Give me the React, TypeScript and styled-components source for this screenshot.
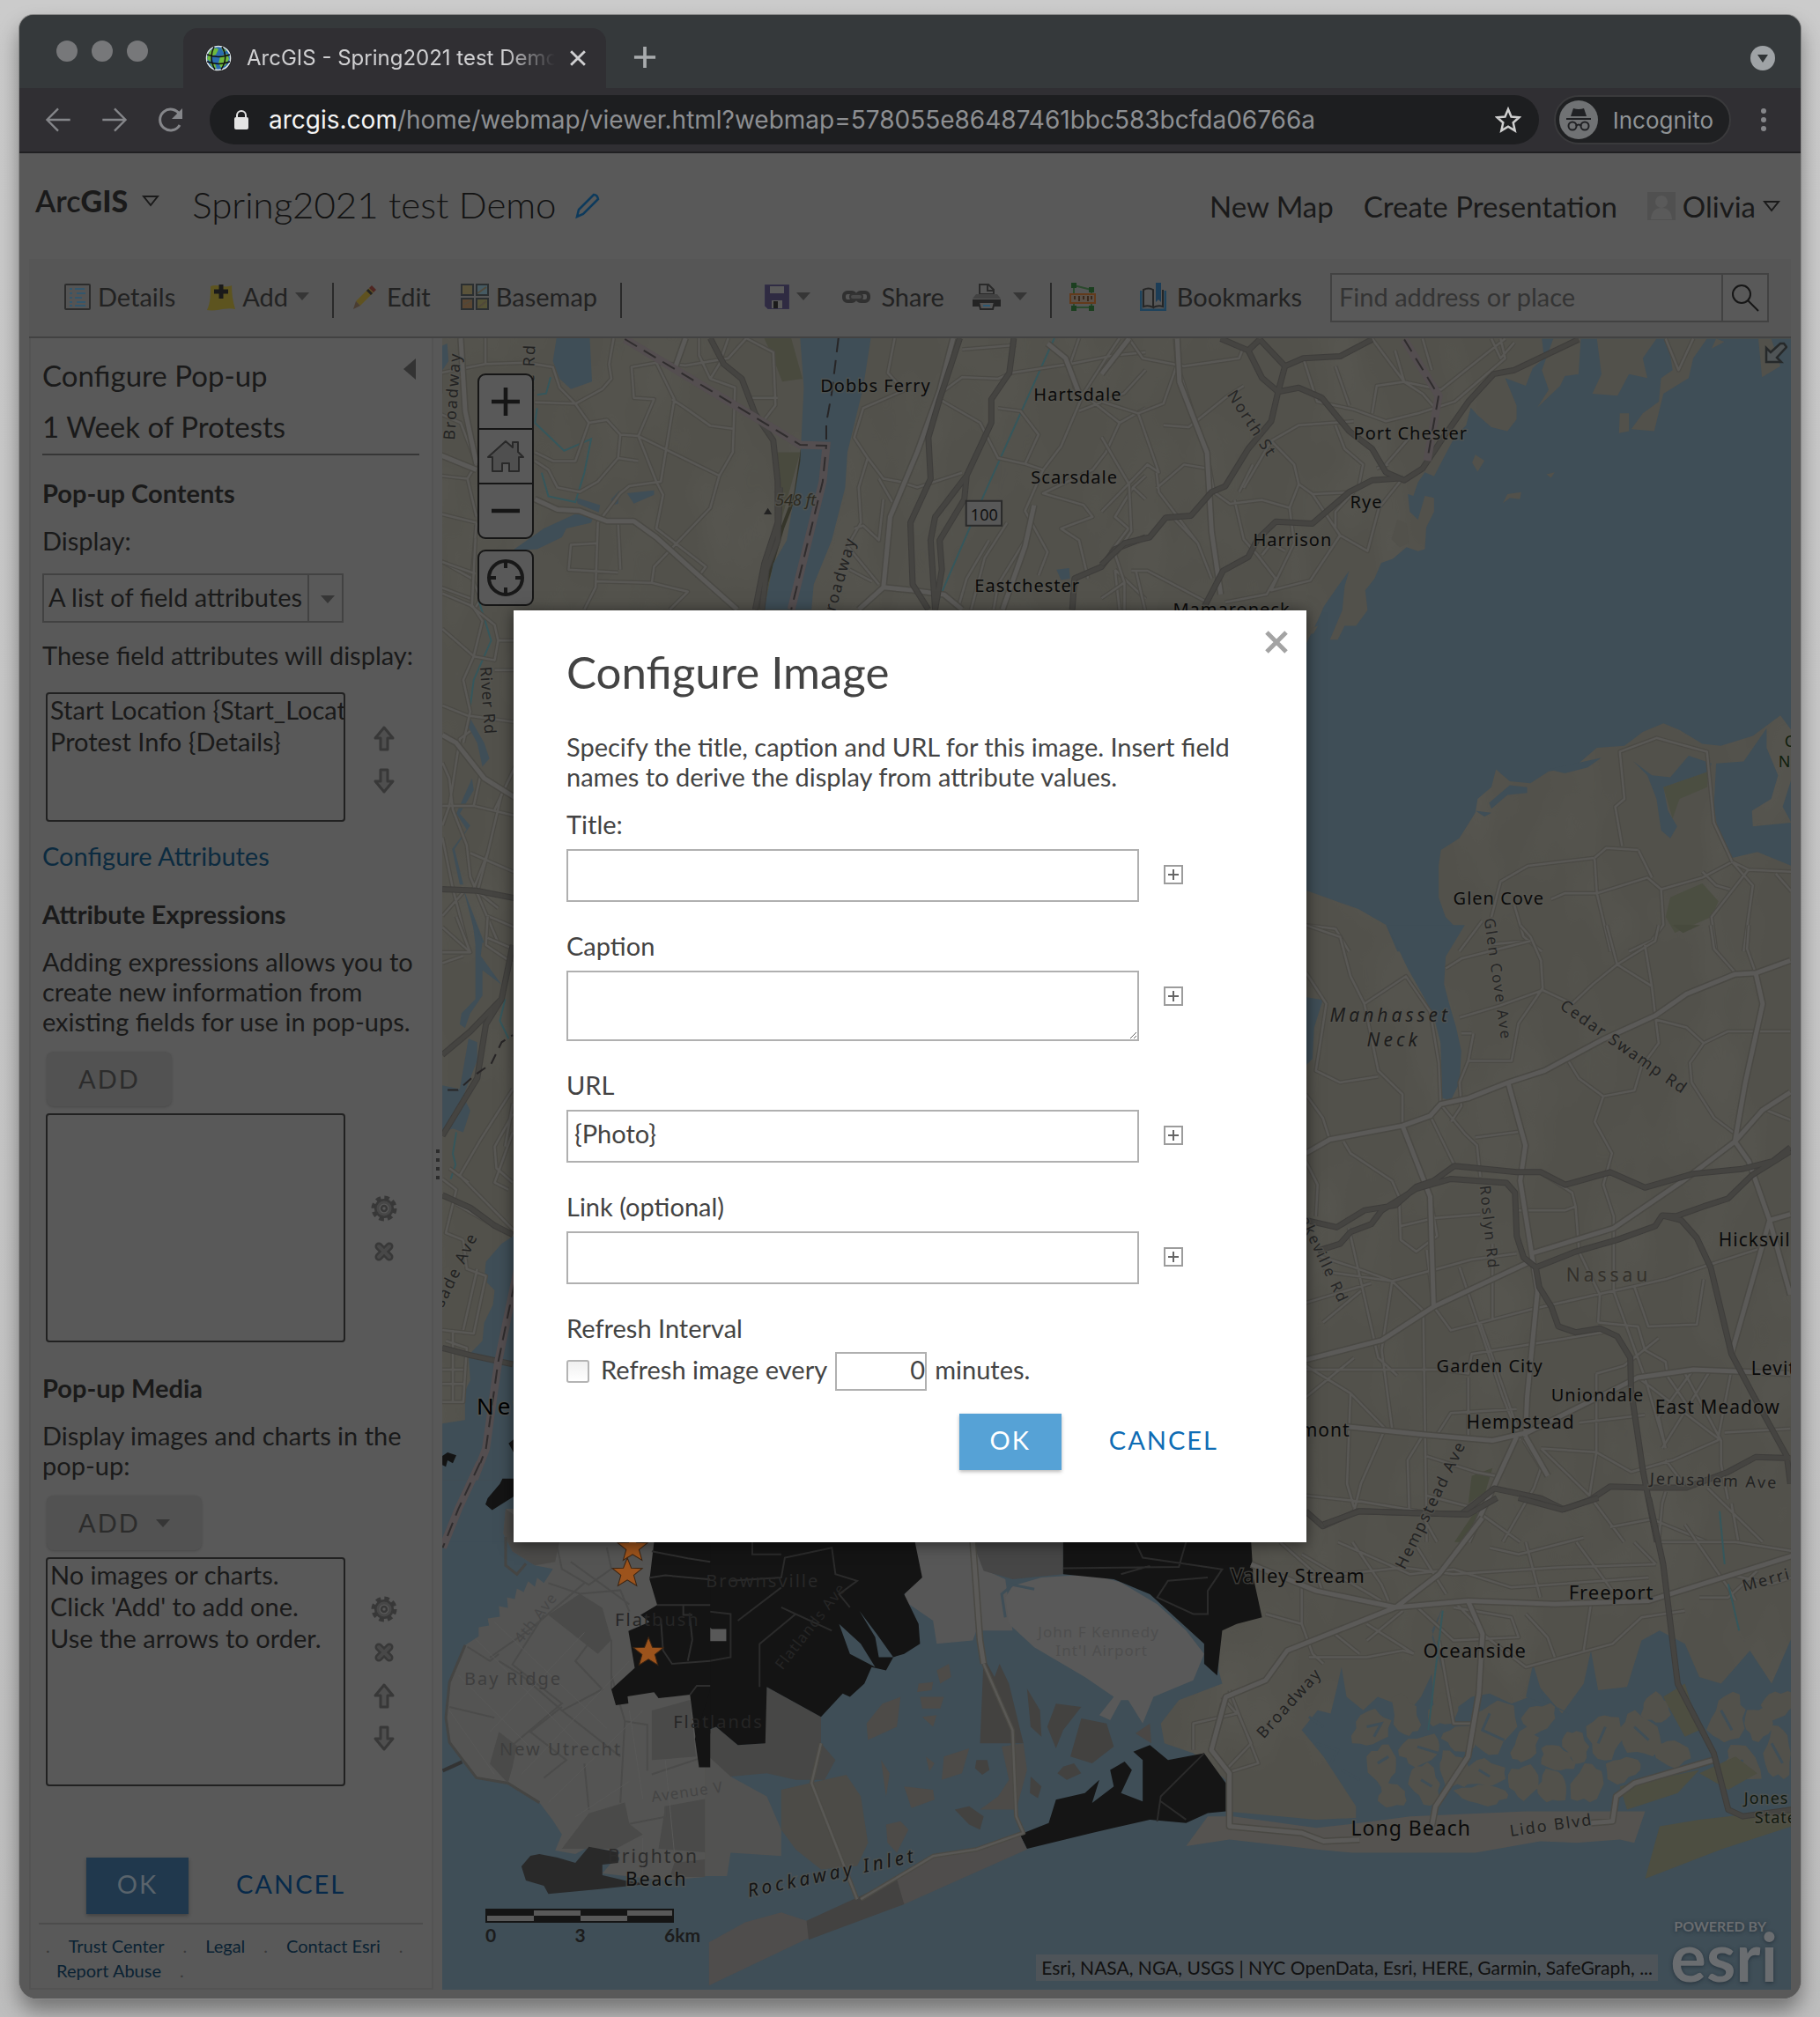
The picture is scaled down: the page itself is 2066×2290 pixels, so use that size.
import React from "react";
import styled, { createGlobalStyle, css } from "styled-components";

const ui = `Lato, "Open Sans", "Liberation Sans", sans-serif`;
const chromeFont = `Inter, Roboto, "Liberation Sans", sans-serif`;

const Global = createGlobalStyle`
  * { box-sizing: border-box; }
  body { margin: 0; background: linear-gradient(#cbcbcb, #c6c6c6 60%, #bebebe); font-family: ${ui}; }
  button, input, select, textarea { font: inherit; color: inherit; margin: 0; }
  button { border: 0; background: none; padding: 0; display: flex; align-items: center; }
  a { text-decoration: none; color: inherit; }
  h1, h2, h3, p { margin: 0; font-weight: 400; }
  svg { display: block; flex: none; }
`;

/* ---------- browser frame ---------- */

const Desktop = styled.div`
  padding: 17px 22px 22px;
`;
const BrowserWindow = styled.div`
  border-radius: 16px 16px 20px 20px;
  overflow: hidden;
  background: #595959;
  box-shadow: 0 0 0 1px #8a8a8a, 0 14px 24px rgba(0, 0, 0, 0.4);
`;
const TabStrip = styled.div`
  display: flex;
  align-items: flex-end;
  height: 83px;
  padding: 0 29px 0 42px;
  background: #35393b;
  color: #d0d0d2;
  font-family: ${chromeFont};
`;
const Lights = styled.div`
  display: flex;
  gap: 16px;
  margin: 0 40px 30px 0;
`;
const Light = styled.span`
  width: 24px;
  height: 24px;
  border-radius: 50%;
  background: #77787a;
`;
const Tab = styled.div`
  display: flex;
  align-items: center;
  gap: 16px;
  width: 480px;
  height: 68px;
  padding: 0 22px 0 24px;
  border-radius: 16px 16px 0 0;
  background: #302f33;
`;
const TabTitle = styled.span`
  flex: 1;
  overflow: hidden;
  white-space: nowrap;
  font-size: 24px;
  line-height: 32px;
  mask-image: linear-gradient(90deg, #000 84%, transparent 100%);
`;
const NewTab = styled.button`
  margin: 0 auto 22px 31px;
  color: #a8abad;
`;
const TabMenu = styled.button`
  margin-bottom: 20px;
`;
const NavBar = styled.div`
  display: flex;
  align-items: center;
  height: 74px;
  padding: 0 28px 0 28px;
  gap: 17px;
  background: #302f33;
  border-bottom: 2px solid #202022;
  font-family: ${chromeFont};
`;
const NavButtons = styled.div`
  display: flex;
  gap: 32px;
  margin-right: 11px;
  color: #85868a;
`;
const Address = styled.div`
  display: flex;
  flex: 1;
  align-items: center;
  height: 56px;
  padding: 0 20px 0 27px;
  gap: 22px;
  border-radius: 28px;
  background: #1d1e20;
  color: #8d8f92;
  font-size: 28px;
`;
const Url = styled.span`
  flex: 1;
  white-space: nowrap;
  b { font-weight: 400; color: #f4f4f4; }
`;
const Incognito = styled.div`
  display: flex;
  align-items: center;
  gap: 17px;
  height: 56px;
  padding: 0 18px 0 4px;
  border: 2px solid #3a3a3c;
  border-radius: 28px;
  background: #1f2022;
  color: #8f9396;
  font-size: 26px;
`;

/* ---------- app header ---------- */

const Page = styled.div`
  position: relative;
  padding: 0 11px 10px;
  background: #595959;
  color: #1a1a1a;
`;
const Header = styled.header`
  display: flex;
  align-items: center;
  height: 120px;
  padding: 0 12px 0 7px;
`;
const Brand = styled.button`
  gap: 16px;
  margin-bottom: 12px;
  font-size: 34px;
  line-height: 40px;
  span { font-weight: 600; }
  b { font-weight: 900; }
`;
const MapTitle = styled.h1`
  margin: 0 20px 4px 37px;
  font-size: 42px;
  line-height: 48px;
  font-weight: 300;
  color: #121212;
`;
const HeaderNav = styled.nav`
  display: flex;
  align-items: center;
  gap: 34px;
  margin-left: auto;
  font-size: 33px;
  line-height: 40px;
`;
const User = styled.button`
  gap: 8px;
`;
const Toolbar = styled.div`
  display: flex;
  align-items: center;
  height: 90px;
  padding: 0 25px 0 40px;
  border-bottom: 2px solid #424242;
  background: #565656;
`;
const ToolGroup = styled.div<{ $end?: boolean }>`
  display: flex;
  align-items: center;
  margin-left: ${(p) => (p.$end ? "auto" : "0")};
`;
const Tool = styled.button<{ $after?: number; $gap?: number }>`
  gap: ${(p) => p.$gap ?? 8}px;
  margin: 0 ${(p) => p.$after ?? 34}px 3px 0;
  font-size: 29px;
  line-height: 34px;
  color: #222;
`;
const Divider = styled.span`
  width: 2px;
  height: 40px;
  margin: 6px 20px 0 0;
  background: #2a2a2a;
`;
const Search = styled.form`
  display: flex;
  width: 498px;
  height: 56px;
  border: 2px solid #424242;
  input {
    flex: 1;
    min-width: 0;
    padding: 0 8px 4px;
    border: 0;
    outline: 0;
    background: #595959;
    font-size: 29px;
  }
  input::placeholder { color: #343434; opacity: 1; }
  button {
    width: 52px;
    justify-content: center;
    border-left: 2px solid #424242;
    background: #595959;
  }
`;

/* ---------- side panel ---------- */

const Workspace = styled.main`
  display: flex;
`;
const Side = styled.aside`
  width: 459px;
  padding: 23px 14px 6px 13px;
  border: 2px solid #535353;
  border-top: 0;
  font-size: 29px;
  line-height: 34px;
`;
const SideHead = styled.div`
  display: flex;
  justify-content: space-between;
  align-items: flex-start;
`;
const SideTitle = styled.h2`
  font-size: 33px;
  line-height: 38px;
`;
const LayerTitle = styled(SideTitle)`
  margin-top: 20px;
  padding-bottom: 12px;
  border-bottom: 2px solid #363636;
  white-space: nowrap;
`;
const Heading = styled.h3<{ $top: number }>`
  margin: ${(p) => p.$top}px 0 20px;
  font-size: 29px;
  font-weight: 700;
`;
const Combo = styled.div`
  position: relative;
  width: 342px;
  margin: 20px 0;
  select {
    width: 100%;
    height: 56px;
    padding: 0 40px 2px 5px;
    appearance: none;
    border: 2px solid #424242;
    border-radius: 0;
    background: linear-gradient(90deg, #595959 299px, #424242 299px 301px, #595959 301px);
  }
  svg { position: absolute; right: 10px; top: 25px; pointer-events: none; }
`;
const ListRow = styled.div<{ $top: number }>`
  display: flex;
  align-items: center;
  gap: 29px;
  margin: ${(p) => p.$top}px 0 0 4px;
`;
const ListBox = styled.select<{ $h: number }>`
  width: 340px;
  height: ${(p) => p.$h}px;
  padding: 0;
  overflow: hidden;
  border: 2px solid #212121;
  border-radius: 4px;
  background: #595959;
  option { height: 36px; padding: 0 3px; line-height: 32px; color: #1a1a1a; overflow: hidden; }
`;
const Actions = styled.div`
  display: flex;
  flex-direction: column;
  gap: 19px;
  padding-top: 5px;
`;
const TextLink = styled.a`
  display: block;
  margin-top: 22px;
  color: #0c2b40;
`;
const AddButton = styled.button`
  height: 62px;
  margin: 17px 0 0 5px;
  padding: 0 36px;
  gap: 18px;
  border-radius: 8px;
  background: #525252;
  color: #2c2c2c;
  letter-spacing: 2px;
  box-shadow: 0 1px 3px rgba(0, 0, 0, 0.18);
`;
const buttonText = css`
  font-size: 29px;
  letter-spacing: 2px;
`;
const SideButtons = styled.div`
  display: flex;
  gap: 54px;
  margin: 81px 0 10px 50px;
`;
const Ok = styled.button<{ $dim?: boolean }>`
  ${buttonText}
  justify-content: center;
  width: 116px;
  height: 64px;
  padding-bottom: 4px;
  background: ${(p) => (p.$dim ? "#20384d" : "#56a2d6")};
  color: ${(p) => (p.$dim ? "#59636b" : "#fff")};
  box-shadow: 0 2px 4px rgba(0, 0, 0, 0.28);
`;
const Cancel = styled.button<{ $dim?: boolean }>`
  ${buttonText}
  padding-bottom: 4px;
  color: ${(p) => (p.$dim ? "#06294a" : "#0e6cb4")};
`;
const FootLinks = styled.footer`
  margin: 0 -4px;
  padding: 10px 8px 0;
  border-top: 2px solid #4c4c4c;
  font-size: 20px;
  line-height: 28px;
  color: #0a2233;
`;
const FootRow = styled.div<{ $inset?: boolean }>`
  display: flex;
  gap: 21px;
  padding-left: ${(p) => (p.$inset ? 12 : 0)}px;
  white-space: nowrap;
  span { color: #3a3a3a; }
`;
const Splitter = styled.div`
  display: flex;
  flex-direction: column;
  align-items: center;
  justify-content: center;
  gap: 6px;
  width: 10px;
  background: #585858;
  i { width: 4px; height: 4px; background: #2c2c2c; }
`;

/* ---------- map ---------- */

const MapPane = styled.section`
  position: relative;
  flex: 1;
  min-width: 0;
  overflow: hidden;
  background: #3f4e57;
`;
const MapArt = styled.svg`
  position: absolute;
  inset: 0;
  width: 100%;
  height: 100%;
  font-family: "Noto Sans", "Open Sans", sans-serif;
`;
const MapControls = styled.div`
  position: absolute;
  left: 40px;
  top: 40px;
  display: flex;
  flex-direction: column;
  gap: 12px;
`;
const ControlStack = styled.div`
  width: 64px;
  overflow: hidden;
  border: 2px solid #161616;
  border-radius: 9px;
  background: #595959;
  button { justify-content: center; width: 60px; height: 60px; color: #161616; }
  button + button { border-top: 2px solid #161616; height: 62px; }
`;
const Expand = styled.button`
  position: absolute;
  right: 4px;
  top: 4px;
`;
const ScaleBar = styled.div`
  position: absolute;
  left: 49px;
  bottom: 48px;
  width: 244px;
  color: #1c1c1c;
  font-size: 21px;
  line-height: 28px;
  font-weight: 700;
`;
const ScaleLabels = styled.div`
  display: flex;
  justify-content: space-between;
`;
const Credits = styled.div`
  position: absolute;
  right: 151px;
  bottom: 10px;
  padding: 0 6px;
  background: #4e5459;
  color: #111;
  font-size: 21px;
  line-height: 30px;
  white-space: nowrap;
`;
const Powered = styled.div`
  position: absolute;
  right: 15px;
  bottom: 12px;
  color: #6a6d70;
  text-shadow: 0 1px 4px #24303a;
  small { display: block; padding-left: 4px; font-size: 16px; line-height: 16px; font-weight: 700; }
  strong { display: block; font: 700 76px/52px ${ui}; }
`;

/* ---------- dialog ---------- */

const Overlay = styled.div`
  position: absolute;
  inset: 0;
  display: flex;
  align-items: center;
  justify-content: center;
`;
const Dialog = styled.div`
  position: relative;
  width: 900px;
  padding: 43px 60px 82px;
  background: #fff;
  color: #434343;
  font-size: 29px;
  line-height: 34px;
  box-shadow: 0 2px 16px rgba(0, 0, 0, 0.55);
`;
const Close = styled.button`
  position: absolute;
  top: 23px;
  right: 21px;
`;
const DialogTitle = styled.h2`
  margin-bottom: 41px;
  font-size: 51px;
  line-height: 54px;
`;
const Field = styled.div`
  margin-bottom: 33px;
  label { display: block; margin-bottom: 11px; }
`;
const Intro = styled.p`
  margin: 0 -8px 20px 0;
`;
const Control = styled.div`
  display: flex;
  gap: 27px;
`;
const boxed = css`
  width: 650px;
  padding: 0 7px 6px;
  border: 2px solid #b0b0b0;
  border-radius: 0;
  outline: 0;
  background: #fff;
`;
const TextInput = styled.input`
  ${boxed}
  height: 60px;
`;
const TextBox = styled.textarea`
  ${boxed}
  height: 80px;
`;
const Insert = styled.button`
  align-self: flex-start;
  margin-top: 17px;
`;
const Refresh = styled.div`
  display: flex;
  align-items: center;
  gap: 9px;
  margin-top: 10px;
  label { padding: 0 0 4px 4px; }
  span { padding-bottom: 4px; }
  input[type="text"] {
    width: 104px;
    height: 44px;
    padding: 0 0 4px;
    border: 2px solid #b0b0b0;
    text-align: right;
    outline: 0;
  }
`;
const Check = styled.input`
  appearance: none;
  width: 26px;
  height: 26px;
  border: 2px solid #b4b4b4;
  border-radius: 3px;
  background: linear-gradient(#f0f0f0, #fff);
`;
const DialogButtons = styled.div`
  display: flex;
  justify-content: flex-end;
  gap: 54px;
  margin: 26px 40px 0 0;
`;

/* ---------- icons ---------- */

const Caret = ({ size = 16, color = "#363636" }) => (
  <svg width={size} height={size / 2 + 1} viewBox="0 0 16 9"><path d="M0 0h16L8 9z" fill={color} /></svg>
);
const OpenCaret = () => (
  <svg width="20" height="14" viewBox="0 0 20 14"><path d="M2 2h16l-8 10z" fill="none" stroke="#1a1a1a" strokeWidth="2" /></svg>
);
const Globe = () => (
  <svg width="32" height="32" viewBox="0 0 32 32">
    <circle cx="16" cy="16" r="15" fill="#1b1b1b" />
    <circle cx="16" cy="16" r="13.6" fill="#2b6cae" stroke="#dfe6ea" strokeWidth="1.5" />
    <path d="M5 10c4-6 9-6 11-4l-3 6-5 2-1 6-4-3zM18 14l8-3 2 6-4 7-5 3-3-5zM6 21l6 1 2 6-5-2zM19 4l6 3-3 3z" fill="#6fb93c" />
    <path d="M11 3c-4 8-4 17 1 26M20 3c5 8 5 17-1 26M3 12c8 3 18 3 26 0M3 20c8 3 18 3 26 0" fill="none" stroke="#111" strokeWidth="1.5" />
  </svg>
);
const Line = ({ d, s = 28, w = 3, color = "currentColor" }: { d: string; s?: number; w?: number; color?: string }) => (
  <svg width={s} height={s} viewBox="0 0 28 28"><path d={d} fill="none" stroke={color} strokeWidth={w} /></svg>
);
const UpArrow = ({ down }: { down?: boolean }) => (
  <svg width="30" height="30" viewBox="0 0 30 30">
    <path d={down ? "M11 2h8v13h6L15 27 5 15h6z" : "M11 28h8V15h6L15 3 5 15h6z"} fill="#4f4f4f" stroke="#383838" strokeWidth="3" strokeLinejoin="round" />
  </svg>
);
const Gear = () => (
  <svg width="30" height="30" viewBox="0 0 30 30" fill="none" stroke="#383838">
    <circle cx="15" cy="15" r="12" strokeWidth="5" strokeDasharray="5.4 4.02" />
    <circle cx="15" cy="15" r="9" strokeWidth="4" />
    <circle cx="15" cy="15" r="7" stroke="#474747" strokeWidth="3" />
    <circle cx="15" cy="15" r="3" strokeWidth="2.5" />
  </svg>
);
const Cross = () => (
  <svg width="30" height="30" viewBox="0 0 30 30" fill="none" strokeLinecap="round">
    <path d="M9 9l12 12M21 9L9 21" stroke="#383838" strokeWidth="9" />
    <path d="M9 9l12 12M21 9L9 21" stroke="#484848" strokeWidth="4" />
  </svg>
);
const DetailsIcon = () => (
  <svg width="30" height="30" viewBox="0 0 30 30">
    <rect x="1" y="1" width="28" height="28" rx="1" fill="#545454" stroke="#2c2c2c" strokeWidth="2" />
    <path d="M6 6h3M6 11h3M6 16h3M6 21h3M6 25h3M12 6h11M14 11h10M12 16h8M14 21h10M12 25h12" stroke="#33566c" strokeWidth="2" />
  </svg>
);
const AddIcon = () => (
  <svg width="32" height="32" viewBox="0 0 32 32">
    <path d="M4 4c8-3 16 3 24-1 0 8 1 18 4 27-9-3-20 3-32 1 4-8 4-18 4-27z" fill="#5d541f" />
    <path d="M16 2v16M8 10h16" stroke="#1a1a1a" strokeWidth="5" />
  </svg>
);
const PencilIcon = () => (
  <svg width="30" height="30" viewBox="0 0 30 30">
    <path d="M5 20L20 5l5 5L10 25z" fill="#5f5220" /><path d="M5 20l5 5-8 4z" fill="#4a3d31" />
    <path d="M20 5l3-3 5 5-3 3z" fill="#4f2622" /><path d="M18 7l5 5" stroke="#222" strokeWidth="3" />
  </svg>
);
const BasemapIcon = () => (
  <svg width="32" height="30" viewBox="0 0 32 30" stroke="#2b2f31" strokeWidth="2">
    <rect x="1" y="1" width="13" height="12" fill="#5a533a" /><rect x="18" y="1" width="13" height="12" fill="#465a62" />
    <rect x="1" y="17" width="13" height="12" fill="#5a4632" /><rect x="18" y="17" width="13" height="12" fill="#555336" />
    <path d="M3 24l9-5M19 11l10-7M20 27l9-7" stroke="#51493a" />
  </svg>
);
const SaveIcon = () => (
  <svg width="28" height="28" viewBox="0 0 28 28">
    <path d="M0 0h28v28H4l-4-4z" fill="#2f2b42" /><path d="M6 2h16v8H6zM8 18h12v9H8z" fill="#595959" />
    <path d="M10 19h5v8h-5z" fill="#1b1b1b" /><path d="M0 0h28v28H4l-4-4z" fill="none" stroke="#37324d" />
  </svg>
);
const LinkIcon = () => (
  <svg width="32" height="16" viewBox="0 0 32 16" fill="none">
    <g stroke="#303030" strokeWidth="4"><rect x="2" y="3" width="13" height="10" rx="4" /><rect x="17" y="3" width="13" height="10" rx="4" /></g>
    <rect x="9" y="5" width="14" height="6" rx="3" fill="#4a4a4a" stroke="#333" strokeWidth="2" />
  </svg>
);
const PrintIcon = () => (
  <svg width="32" height="30" viewBox="0 0 32 30">
    <path d="M8 12V1h10l6 6v5z" fill="#565656" stroke="#2a2a2a" strokeWidth="2" /><path d="M17 1v7h7" fill="none" stroke="#2a2a2a" strokeWidth="2" />
    <path d="M4 12h24l4 5H0z" fill="#424242" /><path d="M0 18h32v8H0z" fill="#242424" />
    <path d="M7 21h18l-2 8H9z" fill="#555" stroke="#252525" strokeWidth="2" /><path d="M12 25h8" stroke="#2d5873" strokeWidth="2" />
  </svg>
);
const MeasureIcon = () => (
  <svg width="30" height="32" viewBox="0 0 30 32">
    <path d="M5 3l20 5v20H5z" fill="none" stroke="#2b4a2d" strokeWidth="2" />
    <rect x="1" y="13" width="28" height="10" fill="#5b5148" stroke="#633b1c" strokeWidth="2" />
    <path d="M6 15v4M11 15v6M16 15v4M21 15v6M25 15v4" stroke="#39291c" strokeWidth="2" />
    <path d="M2 0h6v6H2zM22 5h6v6h-6zM2 26h6v6H2zM22 26h6v6h-6z" fill="#1c3f20" />
  </svg>
);
const BookmarkIcon = () => (
  <svg width="30" height="32" viewBox="0 0 30 32">
    <path d="M1 9v22h28V9" fill="none" stroke="#1f435c" strokeWidth="3" />
    <path d="M4 27V8q6-3 11 0v20q-5-3-11-1zM15 28q6-3 11-1V8" fill="#575757" stroke="#262626" strokeWidth="2" />
    <path d="M18 0h6v22l-3-3-3 3z" fill="#1c3d57" />
  </svg>
);
const HouseIcon = () => (
  <svg width="44" height="38" viewBox="0 0 44 38">
    <path d="M2 20L22 2l8 7V3h6v11l6 6h-5v16H26v-9h-8v9H7V20z" fill="#4f4f4f" stroke="#292929" strokeWidth="2" strokeLinejoin="round" />
  </svg>
);
const LocateIcon = () => (
  <svg width="44" height="44" viewBox="0 0 44 44" fill="none" stroke="#181818" strokeWidth="4">
    <circle cx="22" cy="22" r="19" /><path d="M22 3v8M22 33v8M3 22h8M33 22h8" />
  </svg>
);
const SpyIcon = () => (
  <svg width="44" height="44" viewBox="0 0 44 44">
    <circle cx="22" cy="22" r="22" fill="#707274" />
    <path d="M16 9q6 2 12 0l3 9H13zM8 20h28v2H8z" fill="#202124" />
    <g fill="none" stroke="#202124" strokeWidth="2"><circle cx="15" cy="29" r="4.5" /><circle cx="29" cy="29" r="4.5" /><path d="M19 29q3-3 6 0" /></g>
  </svg>
);
const InsertIcon = () => (
  <svg width="24" height="24" viewBox="0 0 24 24" fill="none">
    <rect x="2" y="2" width="20" height="20" stroke="#9c9c9c" strokeWidth="2" />
    <path d="M12 6v12M6 12h12" stroke="#666" strokeWidth="2" />
  </svg>
);

/* ---------- map drawing ---------- */

const water = "#3f4e57";
const land = "#52514b";

/* Each tile of the map is drawn in its own grid and scaled into place. */
type TileProps = { x: number; y: number; sx: number; sy: number; children: React.ReactNode };
const Tile = ({ x, y, sx, sy, children }: TileProps) => (
  <g transform={`translate(${x} ${y}) scale(${sx} ${sy})`}>{children}</g>
);
const Roads = ({ d, kind }: { d: string; kind: "minor" | "major" | "highway" }) => {
  const style = { minor: ["#4b4a45", 5, "#595855", 2.5], major: ["#4a4944", 8, "#5b5a58", 5], highway: ["#3e3d3b", 7, "#454441", 5] }[kind] as [string, number, string, number];
  return (
    <g fill="none" strokeLinejoin="round">
      <path d={d} stroke={style[0]} strokeWidth={style[1]} vectorEffect="non-scaling-stroke" />
      <path d={d} stroke={style[2]} strokeWidth={style[3]} vectorEffect="non-scaling-stroke" />
    </g>
  );
};
const Border = ({ d }: { d: string }) => (
  <g fill="none">
    <path d={d} stroke="#544e50" strokeWidth="9" vectorEffect="non-scaling-stroke" />
    <path d={d} stroke="#2f2c2d" strokeWidth="2" strokeDasharray="16 9" vectorEffect="non-scaling-stroke" />
  </g>
);

type LabelSpec = { t: string; x: number; y: number; s?: number; r?: number; c?: string; i?: boolean; ls?: number; end?: boolean; bare?: boolean };
const labels: LabelSpec[] = [
  { t: "Dobbs Ferry", x: 931, y: 445 }, { t: "Hartsdale", x: 1173, y: 455 }, { t: "Scarsdale", x: 1170, y: 549 },
  { t: "Eastchester", x: 1106, y: 672 }, { t: "Mamaroneck", x: 1331, y: 699 }, { t: "Port Chester", x: 1536, y: 499 },
  { t: "Rye", x: 1532, y: 577 }, { t: "Harrison", x: 1422, y: 620 }, { t: "Glen Cove", x: 1649, y: 1027 },
  { t: "Garden City", x: 1630, y: 1557 }, { t: "Uniondale", x: 1760, y: 1590 }, { t: "East Meadow", x: 1878, y: 1604, s: 21 },
  { t: "Hempstead", x: 1664, y: 1621, s: 21 }, { t: "Hicksville", x: 1950, y: 1414, s: 21 }, { t: "Levittown", x: 1987, y: 1560, s: 21 },
  { t: "Elmont", x: 1532, y: 1630, s: 21, end: true }, { t: "Valley Stream", x: 1397, y: 1796, s: 22 }, { t: "Freeport", x: 1780, y: 1815, s: 22 },
  { t: "Oceanside", x: 1615, y: 1881, s: 22 }, { t: "Long Beach", x: 1533, y: 2083, s: 23 },
  { t: "Nassau", x: 1777, y: 1454, s: 21, c: "#33302a", ls: 4 },
  { t: "Manhasset", x: 1509, y: 1160, i: true, ls: 4, s: 21, c: "#1c1c1c" }, { t: "Neck", x: 1551, y: 1188, i: true, s: 21, ls: 4, c: "#1c1c1c" },
  { t: "Jones Beach", x: 1979, y: 2047, s: 18, c: "#121a10" }, { t: "State Park", x: 1991, y: 2069, s: 18, c: "#121a10" },
  { t: "Caumsett", x: 2025, y: 848, s: 18, c: "#10200c" }, { t: "N", x: 2018, y: 871, s: 18, c: "#10200c" },
  { t: "Merrick Rd", x: 1979, y: 1806, s: 18, r: -15, c: "#222", ls: 2 }, { t: "Lido Blvd", x: 1714, y: 2084, s: 18, r: -8, c: "#222", ls: 2 },
  { t: "Jerusalem Ave", x: 1872, y: 1684, s: 18, r: 2, c: "#222", ls: 2 }, { t: "Hempstead Ave", x: 1594, y: 1782, s: 18, r: -64, c: "#222", ls: 2 },
  { t: "Broadway", x: 1434, y: 1974, s: 18, r: -48, c: "#222", ls: 2 }, { t: "Rockaway Inlet", x: 850, y: 2153, s: 21, r: -12, i: true, c: "#151515", ls: 4 },
  { t: "Glen Cove Ave", x: 1684, y: 1043, s: 17, r: 82, c: "#262626", ls: 2 }, { t: "Cedar Swamp Rd", x: 1769, y: 1144, s: 18, r: 35, c: "#222", ls: 2 },
  { t: "Roslyn Rd", x: 1679, y: 1346, s: 17, r: 84, c: "#262626", ls: 2 }, { t: "Lakeville Rd", x: 1470, y: 1374, s: 17, r: 65, c: "#262626", ls: 2 },
  { t: "North St", x: 1392, y: 448, s: 18, r: 57, c: "#262626", ls: 2 }, { t: "Broadway", x: 516, y: 500, s: 18, r: -86, c: "#222", ls: 2 },
  { t: "Riverside Rd", x: 603, y: 518, s: 18, r: -88, c: "#222", ls: 2 }, { t: "Broadway", x: 944, y: 708, s: 18, r: -74, c: "#222", ls: 2 },
  { t: "River Rd", x: 545, y: 757, s: 18, r: 86, c: "#222", ls: 1 }, { t: "Palisade Ave", x: 486, y: 1519, s: 18, r: -64, c: "#222", ls: 2 },
  { t: "New York", x: 541, y: 1605, s: 26, ls: 4, c: "#000" },
  { t: "548 ft", x: 880, y: 574, s: 18, i: true, c: "#2c2a20", ls: 0 },
  { t: "Bay Ridge", x: 527, y: 1912, c: "#3e3e3e", bare: true, ls: 2 }, { t: "New Utrecht", x: 567, y: 1992, c: "#3e3e3e", bare: true, ls: 2 },
  { t: "Flatbush", x: 698, y: 1845, c: "#252525", bare: true, ls: 2 }, { t: "Flatlands", x: 764, y: 1961, c: "#252525", bare: true, ls: 2 },
  { t: "Brownsville", x: 801, y: 1801, c: "#282828", bare: true, ls: 2 }, { t: "Brighton", x: 690, y: 2114, s: 21, c: "#2c2c2c", bare: true, ls: 2 },
  { t: "Beach", x: 710, y: 2140, s: 21, c: "#0e0e0e", ls: 2 }, { t: "Avenue V", x: 740, y: 2045, s: 17, r: -8, c: "#444", bare: true },
  { t: "4th Ave", x: 592, y: 1866, s: 17, r: -52, c: "#474747", bare: true, ls: 1 }, { t: "Flatlands Ave", x: 888, y: 1896, s: 17, r: -52, c: "#262626", bare: true },
  { t: "John F Kennedy", x: 1178, y: 1858, s: 17, c: "#4e4e4e", bare: true, ls: 1 }, { t: "Int'l Airport", x: 1198, y: 1879, s: 17, c: "#4e4e4e", bare: true, ls: 1 },
];

/* Marsh islands south of Nassau: x, y, width, height. */
const islets = [
  [920, 640, 50, 110], [940, 745, 42, 120], [975, 590, 36, 130], [985, 715, 58, 90], [955, 860, 40, 75], [1000, 800, 42, 125], [1025, 590, 42, 100],
  [1046, 685, 52, 80], [1040, 765, 42, 110], [1085, 610, 60, 160], [1075, 790, 56, 80], [1065, 865, 70, 60], [1142, 690, 34, 110], [1135, 805, 44, 100],
  [1180, 745, 46, 80], [1155, 620, 46, 90], [1176, 820, 42, 100], [1212, 700, 34, 100], [1222, 805, 46, 115], [1245, 650, 48, 140], [1290, 650, 56, 130],
  [1270, 780, 46, 80], [1320, 590, 40, 90], [1335, 730, 52, 80], [1415, 590, 50, 150], [1462, 630, 40, 100], [1435, 745, 50, 110], [1486, 580, 44, 90], [1490, 690, 38, 160],
];
const isletPath = islets
  .map(([x, y, w, h], n) => {
    const lean = (n % 3) * 6 - 6;
    const points = Array.from({ length: 16 }, (_, k) => {
      const angle = (k / 16) * Math.PI * 2;
      const reach = 0.98 + 0.12 * Math.sin(n * 3.1 + k * 1.3) + 0.1 * Math.sin(n * 5.7 + k * 2.2);
      const dy = Math.sin(angle) * (h / 2) * reach;
      return `${(x + w / 2 + Math.cos(angle) * (w / 2) * reach + (lean * dy) / (h / 2)).toFixed(1)} ${(y + h / 2 + dy).toFixed(1)}`;
    });
    return `M${points.join("L")}Z`;
  })
  .join("");

const star = "M0-17L4.5-5.500 17-5 7.300 2.700 10.700 14.700 0 8-10.700 14.700-7.300 2.700-17-5-4.500-5.500Z";

const MapDrawing = () => (
  <MapArt viewBox="502 384 1531 1874" preserveAspectRatio="xMinYMin slice" role="img" aria-label="Map of New York City and Nassau County">
    <defs>
      <filter id="relief" x="0" y="0" width="1" height="1">
        <feTurbulence type="fractalNoise" baseFrequency="0.012 0.006" numOctaves="3" seed="8" />
        <feColorMatrix values="0 0 0 0 0.2  0 0 0 0 0.2  0 0 0 0 0.18  1.4 0 0 0 -0.6" />
      </filter>
    </defs>
    <rect x="502" y="384" width="1531" height="1874" fill={land} />
    <rect x="502" y="384" width="1531" height="1874" filter="url(#relief)" opacity="0.2" />

    <Tile x={500} y={380} sx={0.5102} sy={0.3333}>
      <path d="M720 12H780L805 150 760 160 740 80zM800 400L760 620 720 936H700L755 640 740 400z" fill="#494a3e" />
      <path d="M806 380L790 540 760 660 718 880" fill="none" stroke="#35352a" strokeWidth="4" vectorEffect="non-scaling-stroke" />
      <path d="M800 12H957L940 180 905 400 900 520 870 700 830 850 825 936H720L740 780 770 700 800 430 808 180ZM258 12H332L337 160 290 185 265 150 250 90ZM160 735L230 660 300 610 340 620 335 640 280 660 270 690 215 730ZM415 540L475 530 475 545 430 575ZM380 560L398 530 395 575 380 582ZM302 555L355 580 352 605 305 575ZM1370 800L1398 795 1400 830 1380 835ZM0 40L15 30 18 90 0 130Z" fill={water} />
      <path d="M245 145L235 200 215 205M215 250L210 300 275 395 335 355 320 470 300 570 240 550 225 470M1365 12L1210 540 1100 930" fill="none" stroke="#35575c" strokeWidth="2" vectorEffect="non-scaling-stroke" />
      <Roads kind="minor" d="M100 12V100L0 130M100 100L190 95 250 110 265 180 300 235 210 230M300 235L360 185 380 150 375 100 385 12M300 235L330 300 370 290 400 340 440 345 500 390 620 480M440 345L475 220 430 215 425 110 480 95 545 105 640 80 680 12M640 12L620 100 600 150 575 70 575 12M480 95L520 220 490 500 420 515 400 540 350 640 345 860 320 936M350 710L290 715 285 800 395 810M395 640L400 800M400 340L395 420 440 430M440 345L480 500 495 545 480 660 590 790 570 830M345 840L470 845 550 875 510 936M470 845L475 790 525 710 600 590 620 480 650 400 655 180 600 150M545 250L600 310 650 320M545 250L515 220M680 12L740 60 745 240 720 290M690 215H750M0 130V200M0 480L60 490 80 440 45 300 0 270M60 490L80 620M0 610L80 640M80 640L70 830 0 770M70 830L90 900 75 936M0 860L70 900M260 520L310 535 350 500 395 420M210 400L250 430 300 430 330 300M210 430L240 460 260 520" />
      <Roads kind="minor" d="M1010 12L995 130 1030 190 940 250 920 350 950 420 930 520 935 640 905 720 975 850M950 420L985 490 1020 500 1060 520 1140 480 1160 470M975 490L1005 570M1110 220L1200 300 1240 420 1300 440 1340 460 1300 600 1350 740 1330 820M1120 190L1160 145 1240 150 1270 130 1400 100 1500 70 1568 60M1160 50L1280 35M1240 250L1290 260 1330 340 1300 440M1420 12L1400 100 1410 180 1510 300 1480 400 1450 460 1340 540 1430 580 1450 620 1380 660 1420 700 1440 830M1568 250L1510 300M1510 12L1480 80 1430 200 1380 380 1340 460M1568 120L1520 200 1420 260M1568 480L1540 520 1568 560M1540 520L1500 620 1530 660 1490 740M1220 700L1170 830 1150 936M1260 640L1210 760 1180 936M1300 700L1240 850 1230 936M1500 800L1568 900M1500 800L1510 936M985 560L975 700 940 650 920 660M910 800L960 840" />
      <Roads kind="major" d="M0 410L80 460M45 12L55 260 80 440M210 560L260 595 310 600 370 635H430L480 690 560 800 660 936M1140 12L1110 190 1060 400 1000 620 985 860 1050 870 1120 885 1160 936M1350 30L1390 80 1420 200M1320 580L1300 720 1250 936M545 12L520 120M985 860L930 936" />
      <Roads kind="highway" d="M600 12L630 100 670 150 700 270 740 360 750 500V640L720 780 700 936M755 520L750 700 725 800 715 936M1155 12L1110 220 1085 350 1090 490 1045 640 1050 850 1085 936M1275 12L1265 130 1225 220V300L1170 480 1100 620 1090 700 1100 936M1170 480L1165 560 1110 700 1115 800 1100 936M1568 690L1500 730 1470 790 1410 830 1405 936" />
      <Border d="M410 15L720 300 800 375 858 378 850 500 780 936" />
      <path d="M885 12L870 200 858 300V378" fill="none" stroke="#272526" strokeWidth="2" strokeDasharray="16 9" vectorEffect="non-scaling-stroke" />
      <path d="M719 612L728 590 737 612z" fill="#222" />
      <rect x="1169" y="566" width="79" height="84" fill="#585858" stroke="#2a2a2a" strokeWidth="2" vectorEffect="non-scaling-stroke" />
    </Tile>
    <text x="1117" y="591" fontSize="18" textAnchor="middle" fill="#111">100</text>

    <Tile x={1250} y={380} sx={0.5204} sy={0.4464}>
      <path d="M960 10L965 60 940 85 925 130 880 110 905 180V215L885 245 850 235 820 205 805 185 795 230 770 260 745 315 725 360 705 350 690 375 680 410 668 405 672 450 690 470 705 410 725 415V450L708 490 705 545 690 550 665 540 635 570 610 580 595 620 575 650 580 700 555 740H530L515 775H498L525 700 530 640 540 600 515 640 485 690 470 730 440 800V1410L500 1435 560 1460 620 1500 645 1568H745L775 1510 750 1480 735 1430V1350L740 1310 780 1280 815 1215 820 1180 850 1150 860 1105 890 1135 935 1140 975 1110 1030 1100 1080 1050 1140 1045 1180 1010 1225 988 1260 1005 1310 1040 1350 1045 1420 1020 1480 968 1504 1005V10Z" fill={water} />
      <path d="M985 10H1045L1040 100 1010 105 1000 130 950 185 975 140 960 90ZM1080 10H1210L1180 60 1190 110 1150 100 1125 155 1070 150 1090 100ZM1235 10H1320L1290 60 1280 110 1225 150 1205 245 1155 240 1180 200 1215 170 1220 110 1245 90ZM1130 200H1150V245L1128 250ZM1432 10H1460L1480 80 1440 108ZM815 305L835 320 820 348 808 325ZM970 355L988 350 980 364ZM875 428L885 405 915 400 912 418 890 415ZM645 470L665 480 670 530 650 540 632 520ZM460 745L472 740 462 760 452 760ZM1340 10L1358 18 1330 35Z" fill={land} />
      <path d="M1450 1000L1400 1085 1340 1090 1335 1200 1345 1270 1375 1330 1430 1315 1504 1350V1240L1420 1250 1418 1210 1460 1180 1475 1120 1450 1050ZM1504 1130L1485 1200 1504 1240ZM1160 1085L1200 1120 1240 1125 1280 1070 1330 1090 1325 1110 1225 1150 1235 1210 1255 1250 1240 1280 1220 1260 1210 1180 1190 1120ZM845 1190L890 1145 928 1150V1165L885 1170 850 1205ZM815 1210L850 1215 835 1225ZM975 1105L1090 1075 1060 1100 1010 1115Z" fill={water} />
      <path d="M1225 1150L1325 1110 1320 1150 1260 1180 1245 1230ZM1240 1430L1310 1395 1345 1440 1330 1480 1250 1520 1230 1480Z" fill="#4b4e41" />
      <Roads kind="minor" d="M60 10L90 60 180 80 300 60 310 30M0 170L80 200 135 175 165 75 160 10M80 200L125 350 100 330 0 450M135 230L190 235 270 160 310 130M165 75L200 200 230 300 245 400M120 390L180 330 230 340M0 260L60 380 65 500 30 560 50 630V700M120 350L125 400 210 530 240 620M160 470L210 530M65 600L100 600 230 680M50 630L0 670M75 600L95 700M245 400L280 430 350 420 410 440 430 380 420 330 370 270 430 230 550 220M290 420L310 520 340 560 380 620 360 660 270 680M300 400L330 330M370 270L310 390M350 560L370 530 400 550M410 440L420 530 370 650 455 625 520 510 580 550 605 440 660 360M430 380L460 405 520 510M460 405L550 400M510 490L510 450 550 400M510 230L530 290 570 330 560 390M440 60L470 170 550 190 620 220 690 200 770 170 880 60 870 10M510 80L540 180M590 10L660 120 600 130 590 200M660 120L700 150 730 190M660 120L740 140 880 10M700 10L720 90M850 10L870 60 900 20M640 40L660 120M625 330L600 340M680 250L620 330M1230 10L1258 90 1290 10" />
      <Roads kind="minor" d="M440 1500L510 1510 540 1568M1075 1330L1080 1420 1110 1568M1075 1330L930 1350 870 1390 850 1480M980 1435L1010 1420 1080 1420 1190 1380 1220 1410M1220 1410L1310 1380 1375 1340M1220 1410L1225 1500 1200 1540 1150 1568M1375 1340L1410 1360 1504 1365M1375 1340L1420 1400 1400 1568M1310 1365L1340 1400 1370 1410M1410 1360L1330 1480 1340 1568M1170 1310L1200 1380M1470 1370L1504 1415M900 1450L920 1530 960 1568M850 1550L940 1540M780 1568L830 1490" />
      <Roads kind="major" d="M165 10L170 120 230 300 240 500 260 660M0 100L60 10" />
      <Roads kind="minor" d="M1075 1330L1100 1305 1170 1310M1135 1300L1120 1200 1140 1180 1130 1060 1210 1025 1320 1060 1335 1240 1375 1340" />
      <Roads kind="highway" d="M260 10L320 40 350 110 385 145 430 135 480 160 540 245 590 290 620 350 660 370 700 340 740 270 800 170 855 100 900 90 1040 12M345 12L320 40M345 12L400 80 385 145 370 220 320 290 270 385 240 400 195 460 140 465 105 515 50 530 0 585M650 365L590 370 540 400 460 480 380 475 340 520 320 565 265 600 225 690M400 80L440 60 520 55 590 12" />
      <Border d="M660 12L735 155 710 320" />
    </Tile>

    <Tile x={1450} y={1050} sx={0.3929} sy={0.4464}>
      <path d="M315 0L375 110 420 180 450 230 470 300 475 440 500 445 525 400 530 320 515 260 495 200 480 150 485 80 540 0ZM60 180L130 190 105 260 100 340 60 375Z" fill={water} />
      <path d="M560 1400L620 1380 600 1440 550 1470ZM570 1490L620 1440 540 1568H510ZM1140 0H1220L1170 20Z" fill="#474a3d" />
      <Roads kind="minor" d="M81 0L180 30 210 130 250 200 290 370 360 430V510M81 120L140 200 110 370 180 400 290 385M250 200L370 130 440 220 465 350 470 455M81 430L130 490 150 545M190 550L210 580 330 650 350 690M110 740L115 660 81 600M440 485L510 610M470 455L540 530 575 560 585 640M500 500L530 460 525 400 550 345H675L695 250 765 160 760 90 730 30 700 0M525 235L640 205 765 165M485 110L530 85 730 40M560 275H530M565 275L550 345M570 540L700 525M765 165L850 200 910 150 980 100 1090 40 1100 0M950 0L980 100 1080 155 1060 50M1080 155L1090 230 1100 300 1050 360 1030 420 940 435 915 500 965 580 940 660 970 740V930M835 340L870 390 940 435M1090 240L1180 260 1230 300 1190 350 1195 400 1260 490 1320 530M1230 300L1300 270 1480 270M1250 0L1260 60 1320 120M1360 0L1355 60 1380 122M1410 470L1480 495M350 690L355 800 400 830 460 790 440 690M355 765L450 745 585 735M690 725L830 725 860 715 850 680 760 630M860 715L870 830 930 940 925 1010M205 770L290 1100M130 880L330 905 560 850 690 835M115 840L220 870 330 905 420 980 430 1568M430 825L450 970M330 905L300 1080 330 1280M81 960L270 910M130 1010L240 930M450 970L500 1030 740 975 1120 900 1240 865 1400 820M525 870L650 1200 700 1310M585 1010L700 1300M620 810V1000M970 930L1060 1150 1120 1330M1030 920L1070 1020 1210 1015 1230 900M925 1010L1040 1020 1060 1080 1120 1110 1125 1140M920 1140L1000 1120 1100 1050M81 1130H470L550 1140 560 1090 940 1035M81 1200L220 1100M81 1120L210 1190 310 1280M290 1100L345 1145M210 1190L200 1420 220 1480M310 1280L240 1420 220 1490M420 1295L375 1360 380 1500M430 1350L570 1390 630 1400M460 1295L500 1240 690 1230M550 1150V1300M710 1310L760 1380 740 1430 650 1568M760 1330L920 1340 1020 1390 1140 1360 1270 1310 1310 1130M760 1330L900 1450 1000 1568M1040 1150L1280 1310V1370L1300 1460M1120 1140L1190 1230M1170 1130L1280 1310M1200 1130L1100 1250 1120 1330M1250 1130L1110 1330M920 1140V1340L900 1450M870 1265L1060 1245M1290 1290L1480 1280M1100 1568L1110 1470 1120 1440M1120 1360L1180 1430M1240 1430L1400 1568M1310 1470L1330 1568M960 1530L1080 1510 1240 1568M81 1450L240 1465 410 1490 460 1568M430 1450L560 1480 700 1568" />
      <Roads kind="major" d="M81 580L150 545 360 510 440 485 470 455 550 440 665 400 770 370 940 290 1090 230 1180 175 1320 125 1380 122 1480 90M81 1105L300 1055 450 970 730 855M730 835L860 800 970 770 1170 650 1320 550 1400 470 1480 425M1380 122L1400 200 1350 400 1320 550 1360 600 1420 750 1310 1090M200 1275L420 1295 620 1310 720 1290 1040 1150 1200 1130 1480 1140M690 1300L550 1568M750 930L720 1200 715 1300M360 510L440 690 450 970M665 400L715 560 700 650 750 930M1420 750L1480 940M1420 750L1480 735M715 1300L780 1400" />
      <Roads kind="highway" d="M81 750L170 768 250 725 340 712 400 665 450 650 510 612 690 628H760L830 660 960 628 1060 667 1200 632 1340 620 1430 600 1480 565M115 828L180 810 210 780 270 760 300 725 400 670 500 645 660 655 685 680 690 790 710 845 745 870 860 830 980 800 1090 765 1110 738 1150 740 1230 715 1300 695 1370 635 1480 575M1110 738L1165 750 1210 795 1250 870 1280 980 1310 1090 1370 1190 1470 1350 1480 1420M745 870L755 920 790 970 810 1020 860 1035 930 1025 980 1045 1018 1100 1020 1180 1055 1390 1095 1568M81 1490L130 1528 230 1490 400 1495 530 1497 625 1432 760 1457 825 1485 900 1462 960 1427 1060 1430H1180L1300 1390 1380 1352 1480 1355" />
    </Tile>

    <Tile x={0} y={370} sx={0.3954} sy={0.4464}>
      <path d="M1350 870L1345 990 1390 1060 1405 1100 1385 1120 1370 1060 1345 1020ZM1355 1150L1360 1180 1320 1240 1350 1270 1305 1330 1330 1420 1320 1420 1298 1330 1340 1280 1310 1240ZM1330 1430L1390 1568H1370Z" fill={water} />
      <path d="M1375 700L1410 800 1360 900 1345 1000" fill="none" stroke="#35575c" strokeWidth="2" vectorEffect="non-scaling-stroke" />
      <Roads kind="minor" d="M1270 600L1365 630M1270 680L1350 710 1420 760 1430 800 1500 800M1365 540L1355 710 1385 750 1360 840 1270 770M1360 840L1420 850 1430 800M1420 875H1500M1360 840L1330 900 1350 980 1330 1060M1270 965L1340 990 1500 1010M1350 1030L1320 1050 1290 1220 1270 1270M1270 1220L1360 1220 1500 1250M1270 1110L1290 1150 1300 1230 1340 1320 1350 1400 1430 1568M1500 1080L1420 1230M1380 1140L1360 1220M1400 1340L1370 1440M1350 1340L1480 1390M1440 1190L1400 1340 1360 1430 1430 1480M1270 1300L1300 1430 1340 1568M1270 1500L1330 1440M1400 1500L1480 1530" />
      <Roads kind="major" d="M1270 1040L1310 1060 1390 1150 1480 1200" />
      <Roads kind="highway" d="M1270 1432L1370 1436 1480 1455" />
    </Tile>

    <Tile x={0} y={1040} sx={0.3954} sy={0.4082}>
      <path d="M1355 0L1385 70 1380 110 1440 190 1385 150V220L1350 270 1335 310 1320 300 1325 270 1365 230V80ZM1345 340L1370 350V400L1330 500 1350 540 1330 600 1300 590 1270 600V470L1320 480ZM1472 890L1440 910 1395 960 1390 1010 1420 1040 1415 1080 1390 1130 1385 1180 1345 1220 1350 1290 1335 1320V1400L1270 1410V1568H1520V890Z" fill={water} />
      <path d="M1310 600L1300 660 1308 690 1294 730M1450 230L1435 290 1460 340" fill="none" stroke="#35575c" strokeWidth="2" vectorEffect="non-scaling-stroke" />
      <Roads kind="minor" d="M1270 30L1350 100H1270M1310 0L1350 100M1270 130L1330 110M1400 60L1472 90M1400 0L1395 80 1472 130M1472 480L1380 620 1320 720 1360 760 1472 870M1472 550L1420 640 1425 700 1472 740M1472 600L1420 740 1460 760M1472 520L1450 640M1270 730L1310 760 1280 880 1330 900M1310 800L1400 850 1430 860M1330 900L1340 980 1395 1000 1360 1160 1270 1150M1370 980L1330 1150M1280 1180L1340 1200 1330 1350H1270M1300 1150V1350M1270 1260H1330M1270 1300H1330M1290 700L1345 740" />
      <Roads kind="highway" d="M1472 80L1440 230 1350 320 1270 385M1440 230L1395 300 1370 450 1270 610M1270 775L1350 810 1420 860 1472 885M1270 1200L1350 1220 1472 1245" />
      <path d="M1285 483H1315L1365 440 1410 410 1440 350 1472 330" fill="none" stroke="#272526" strokeWidth="2" strokeDasharray="12 8" vectorEffect="non-scaling-stroke" />
      <Border d="M1490 960L1430 1240 1395 1480 1360 1568" />
      <path d="M1270 1500L1285 1490 1310 1498 1300 1520 1285 1512 1280 1530 1270 1525ZM1460 1465L1480 1450V1500Z" fill="#141414" />
    </Tile>

    <rect x="502" y="1680" width="700" height="578" fill={water} />
    <Tile x={780} y={1700} sx={0.8202} sy={0.3763}>
      <path d="M-340 133H735V520L740 560 680 610 655 680 660 740 700 770 745 850V945L870 970 925 965V930L880 780 850 700 872 640 890 650 900 560 905 510 912 600 935 640 955 600 980 620 1000 640 1015 600 1030 530 1032 620 1060 640 1085 600 1110 590 1140 620 1165 600 1175 560 1210 650 1240 560 1250 460 1260 580 1300 570 1320 430 1345 400 1380 440 1400 540 1430 560 1470 460 1500 560 1528 420V1500H-340Z" fill={water} />
      <path d="M1030 400L1045 330 1030 420 1050 560ZM1170 500L1185 610 1220 650 1160 600Z" fill={water} />
      <path d={isletPath} fill={land} />
      <path d="M940 690L960 680 950 720M955 800L970 780M1010 750L1040 770M1015 850L1030 870M1110 650L1100 700 1130 730M1095 820L1110 840M1270 690L1260 740M1310 690L1330 730M1430 640L1445 700M1460 790L1450 820M1500 740L1515 800M870 740L900 760 890 800M905 820L930 850M860 660L880 690" fill="none" stroke={water} strokeWidth="3" vectorEffect="non-scaling-stroke" />
      <path d="M720 960L690 1050 750 1030 870 1060 920 1070H1090L1180 1035 1230 1040 1290 1030 1310 1040 1325 945 1160 945 1000 960 930 980 870 995 755 960Z" fill="#555350" />
      <path d="M1325 1148L1345 990 1400 970 1480 950 1528 930V990L1430 1060ZM1350 600L1380 560 1400 700 1380 720ZM1400 830L1450 780 1480 830 1440 880ZM1290 870L1400 820 1370 890 1300 940Z" fill="#4d4e41" />
      <path d="M110 570L185 660V740L205 790 190 850H150L110 830 60 840 0 800V735L40 690 70 745 105 740Z" fill="#474746" />
      <path d="M0 720L60 840 110 900 130 1000V1080L60 1070 55 1140H0Z" fill="#525251" />
      <path d="M130 880L220 835 240 900 250 1040 235 1110 185 1120 150 1060 130 1000Z" fill="#4c4b47" />
      <path d="M310 133H395L410 215 440 245 450 400 400 400 395 430 345 440 340 370 300 310Z" fill="#575757" />
      <path d="M395 133H520V230L450 245 410 220Z" fill="#464646" />
      <path d="M440 300L450 265 490 240 560 230 600 255 650 320 690 400 715 470 700 550 645 600 630 680 610 610H600L585 670 570 655 590 600 550 540 480 450 445 380Z" fill="#595959" />
      <path d="M440 360L435 290 450 262 480 275" fill="none" stroke={water} strokeWidth="3" vectorEffect="non-scaling-stroke" />
      <path d="M0 133H315L325 240 300 290 320 380 322 440 300 470 285 480 275 520 255 510 245 560 225 600 215 590 185 660 110 570 108 740 70 745 40 690 5 720 0 640Z" fill="#141414" />
      <path d="M520 133H780L783 240 795 360 760 380 740 400 733 535 715 500V440L685 380 640 290 590 245 520 230Z" fill="#141414" />
      <path d="M460 1015L500 980 510 910 550 890 570 850 560 920 590 870 585 820 605 795 615 820 600 890 630 915V790L617 765 640 745 665 790 715 770 745 860V945L720 950 690 980 640 970 560 1010 470 1058Z" fill="#151515" />
      <path d="M18 388H30L34 395H54V432H18Z" fill="#585858" />
      <path d="M210 380L225 470 260 510 240 440ZM238 340L260 420 265 480 285 480 262 410Z" fill={water} />
      <path d="M460 1015L470 1060 300 1225 165 1330 30 1470V1340L80 1280 130 1250 165 1275 250 1200 300 1130 350 1070 400 1060Z" fill="#4f4d4c" />
      <path d="M165 1275L290 1150 300 1225 168 1332Z" fill="#434241" />
      <path d="M410 480L425 540 432 500 445 560 465 740H405ZM470 575L488 640 490 720 475 690ZM510 620L545 630 520 700 510 755 498 690ZM545 665L580 680 590 750 560 800 530 780ZM520 810L535 800 545 830 525 850 512 830ZM400 790L415 790 418 820 408 835 398 815ZM475 840L490 870 485 905 474 890ZM370 940L390 930 410 960 405 1000 390 985Z" fill="#434240" />
      <path d="M435 750L465 740 470 820 455 940H405L430 900 445 850ZM270 620L295 600 290 690 250 730 248 680ZM345 520L362 500 365 540 350 560ZM320 560L340 555 338 580 318 585ZM322 600L355 600 350 635 325 635ZM325 660L345 655 340 690ZM300 870L340 880 342 910 310 935ZM355 780L390 755 380 830 352 850ZM330 780L342 800 335 825ZM275 985L295 975 306 1000 290 1070 277 1040ZM268 790L280 830 275 900Z" fill="#4d4b48" />
      <path d="M620 710L640 680 642 740Z" fill="#4a4745" />
      <Roads kind="minor" d="M820 133L870 230 880 290M850 170L960 310M920 133L960 260 970 310M860 240L990 210 1060 230 1200 210 1340 200M900 133L1000 230 1060 215M1060 215L1140 270 1330 240M1050 290L1010 150M1060 310L1100 400 1095 590M1340 200L1310 133M1160 133L1180 300M1230 133L1290 310M1110 150L1150 170 1240 120M1340 133L1450 133 1528 160M1440 230L1500 260 1528 240M1400 300L1440 300 1480 220M1380 80L1440 270 1450 310M860 480L940 480 990 460 1005 470M890 400L930 470M940 380L1005 470M990 340L940 430M800 350L850 380 865 470 880 500M850 240V380M1010 330L1060 430 1150 420 1140 360 1060 330M1100 410L1160 510 1280 440 1320 360 1380 340M1040 430L1060 680H1090M700 760L700 680 760 650 740 600M760 640L780 740 745 820M750 580L790 800 745 830M740 620L725 750M1200 480L1190 420 1160 350M1250 320L1240 460" />
      <Roads kind="major" d="M780 200L870 280 980 330 1080 310 1200 320 1330 310 1528 175M980 330L830 460 800 550 745 600 725 760 750 830V990L850 1010 880 1035 930 1030M1095 590L1080 780 1035 930 1030 990M1100 60L1040 230 980 330M1080 310L1100 410 1095 590M1420 790L1310 860 1285 900 1280 975 1250 980M395 133L405 430 410 500" />
      <Roads kind="minor" d="M410 500L450 700 455 960 465 1010 400 1060 340 1080 240 1210M185 740L172 860 235 1210" />
      <Roads kind="highway" d="M1330 0L1350 200 1370 560 1420 770 1440 940 1460 960 1528 940M880 80L930 40 1080 50 1120 0M1150 0L1210 35 1260 0" />
      <path d="M1428 40L1435 200M1440 260L1455 400M1045 340L1025 700" fill="none" stroke="#35575c" strokeWidth="2" vectorEffect="non-scaling-stroke" />
      <path d="M20 133V340L60 350V480L10 500 0 560M60 250L130 240 135 180 200 150 205 230 235 250 210 290 225 330M90 133V170H130M100 570V440L150 350 200 400M70 370L130 270M150 350L130 330M520 212L680 208 690 133M620 133L630 180 740 215 720 280V350H700L650 300 665 250 720 240M600 230L640 205M650 975L655 900 715 770M690 970L655 915" fill="none" stroke="#2b2b2b" strokeWidth="2" vectorEffect="non-scaling-stroke" />
    </Tile>

    <Tile x={0} y={1660} sx={0.5102} sy={0.4018}>
      <path d="M1125 130L1120 200 1140 250 1190 290 1230 300 1210 340 1195 325 1190 350 1175 335 1165 365 1150 355 1145 385 1128 380 1130 410 1110 405 1112 435 1085 440 1088 460 1065 465 1065 490 1035 515 1020 560 1000 620 992 720 1000 790 1030 840 1060 890 1130 905 1200 960 1230 1010 1250 1050 1235 1095 1280 1105 1310 1085 1380 1100 1340 1160 1480 1180 1568 1170V130Z" fill="#545453" />
      <path d="M1125 130L1120 200 1140 250 1190 290 1235 280 1245 220 1200 200Z" fill="#4b4a48" />
      <path d="M1125 210V290L1150 315 1170 285M1035 515L1020 560 1000 620 992 720 1000 790 1030 840 1060 890 1130 905 1200 960" fill="none" stroke="#454543" strokeWidth="3" vectorEffect="non-scaling-stroke" />
      <path d="M1220 430L1290 370 1340 410 1360 500 1330 540ZM1110 760L1150 800 1140 860 1130 905 1090 850ZM1450 700L1535 670 1548 830 1450 840ZM1250 1090L1310 990 1390 960 1400 1020 1430 1050 1370 1090ZM1480 970L1568 950V1100L1465 1090Z" fill="#4a4a49" />
      <path d="M1160 1140L1180 1110 1200 1105 1240 1115 1280 1130 1310 1085 1375 1100V1130L1340 1135V1165L1390 1180 1440 1190 1330 1205 1220 1218 1210 1195 1170 1180Z" fill="#292929" />
      <path d="M1500 1130L1568 1120V1170H1490Z" fill="#4a4948" />
      <g fill="none" stroke="#4b4b4a" strokeWidth="2">
        <path vectorEffect="non-scaling-stroke" d="M1240 240L1250 300 1310 345 1360 300 1350 240M1220 340L1290 370 1380 360 1400 420M1090 550L1180 470 1300 340M1110 560L1160 600 1250 700 1380 830M1210 430L1140 570 1250 680 1110 830M1250 690L1180 760 1260 840 1210 890M1310 510L1280 560 1340 640 1250 700M1000 690L1100 720M1300 850L1310 980M1390 730L1380 960M1360 600L1390 730 1440 740V870M1450 880L1568 830M1400 1020L1480 1000V970M1040 520L1090 560 1110 540M1360 500V640M1270 280L1400 400" />
      </g>
      <g fill="none" stroke="#595958" strokeWidth="1">
        <path vectorEffect="non-scaling-stroke" d="M1060 500L1290 800M1020 600L1200 830M1000 700L1100 880M1090 760L1300 480M1160 880L1400 560M1220 960L1430 700M1400 700L1430 950M1480 840L1500 1100M1280 1000L1400 900M1100 450L1350 750M1430 1060L1430 1170" />
      </g>
      <path d="M1455 224H1580V765H1560L1548 785 1535 655 1465 665 1455 648 1396 660 1398 680 1370 685 1360 640 1412 580 1398 475 1445 450 1425 430 1462 402 1445 330Z" fill="#141414" />
      <path d="M1546 780L1580 640V860H1555Z" fill="#141414" />
      <path d="M1450 250L1530 270 1580 280M1445 325L1480 318 1580 330M1462 402L1580 402M1470 440L1475 530 1495 568 1580 560M1535 440L1540 500 1530 560M1520 400V430H1540M1535 655L1550 630 1580 630" fill="none" stroke="#2e2e2e" strokeWidth="2" vectorEffect="non-scaling-stroke" />
      <path d="M985 870L1028 845" stroke="#333" strokeWidth="4" vectorEffect="non-scaling-stroke" />
      <path d="M1150 45H1118L1112 60 1085 100 1080 118 1095 134 1150 90Z" fill="#141414" />
      <Border d="M1068 0L1020 130 985 240" />
    </Tile>

    {[[718, 1756], [712, 1785], [736, 1875]].map(([x, y]) => (
      <path key={y} d={star} transform={`translate(${x} ${y})`} fill="#9c531c" stroke="#3a2413" strokeWidth="1" />
    ))}

    {labels.map((l) => (
      <text
        key={l.t + l.x}
        transform={`translate(${l.x} ${l.y}) rotate(${l.r ?? 0})`}
        fontSize={l.s ?? 20}
        fontStyle={l.i ? "italic" : "normal"}
        letterSpacing={l.ls ?? 1}
        textAnchor={l.end ? "end" : "start"}
        fill={l.c ?? "#0a0a0a"}
        stroke={l.bare ? "none" : "#565550"}
        strokeWidth="3"
        strokeOpacity="0.6"
        paintOrder="stroke"
      >
        {l.t}
      </text>
    ))}
  </MapArt>
);

/* ---------- parts ---------- */

const InsertField = ({ what }: { what: string }) => (
  <Insert type="button" aria-label={`Insert a field name in ${what}`}><InsertIcon /></Insert>
);

const ConfigureImage = () => (
  <Dialog role="dialog" aria-labelledby="dialog-title">
    <Close aria-label="Close">
      <svg width="26" height="26" viewBox="0 0 26 26"><path d="M2 2l22 22M24 2L2 24" stroke="#a3a3a3" strokeWidth="5" /></svg>
    </Close>
    <DialogTitle id="dialog-title">Configure Image</DialogTitle>
    <Intro>Specify the title, caption and URL for this image. Insert field names to derive the display from attribute values.</Intro>
    <Field>
      <label htmlFor="title">Title:</label>
      <Control><TextInput id="title" /><InsertField what="title" /></Control>
    </Field>
    <Field>
      <label htmlFor="caption">Caption</label>
      <Control><TextBox id="caption" /><InsertField what="caption" /></Control>
    </Field>
    <Field>
      <label htmlFor="url">URL</label>
      <Control><TextInput id="url" defaultValue="{Photo}" /><InsertField what="URL" /></Control>
    </Field>
    <Field>
      <label htmlFor="link">Link (optional)</label>
      <Control><TextInput id="link" /><InsertField what="link" /></Control>
    </Field>
    <div>Refresh Interval</div>
    <Refresh>
      <Check type="checkbox" id="refresh" />
      <label htmlFor="refresh">Refresh image every</label>
      <input type="text" aria-label="Minutes" defaultValue="0" />
      <span>minutes.</span>
    </Refresh>
    <DialogButtons><Ok>OK</Ok><Cancel>CANCEL</Cancel></DialogButtons>
  </Dialog>
);

const SidePanel = () => (
  <Side>
    <SideHead>
      <SideTitle>Configure Pop-up</SideTitle>
      <button aria-label="Collapse panel"><svg width="18" height="24" viewBox="0 0 18 24"><path d="M14 0v24L0 12z" fill="#333" /></svg></button>
    </SideHead>
    <LayerTitle>1 Week of Protests</LayerTitle>
    <Heading $top={26}>Pop-up Contents</Heading>
    <label htmlFor="display">Display:</label>
    <Combo>
      <select id="display"><option>A list of field attributes</option></select>
      <Caret />
    </Combo>
    <label htmlFor="fields">These field attributes will display:</label>
    <ListRow $top={25}>
      <ListBox id="fields" size={4} $h={147}>
        <option>{"Start Location {Start_Location}"}</option>
        <option>{"Protest Info {Details}"}</option>
      </ListBox>
      <Actions>
        <button aria-label="Move up"><UpArrow /></button>
        <button aria-label="Move down"><UpArrow down /></button>
      </Actions>
    </ListRow>
    <TextLink href="#attributes">Configure Attributes</TextLink>
    <Heading $top={32}>Attribute Expressions</Heading>
    <p>Adding expressions allows you to create new information from existing fields for use in pop-ups.</p>
    <AddButton>ADD</AddButton>
    <ListRow $top={8}>
      <ListBox aria-label="Expressions" size={7} $h={260} />
      <Actions>
        <button aria-label="Configure expression"><Gear /></button>
        <button aria-label="Remove expression"><Cross /></button>
      </Actions>
    </ListRow>
    <Heading $top={35}>Pop-up Media</Heading>
    <p>Display images and charts in the pop-up:</p>
    <AddButton>ADD<Caret /></AddButton>
    <ListRow $top={8}>
      <ListBox aria-label="Media" size={7} $h={260}>
        <option>No images or charts.</option>
        <option>Click 'Add' to add one.</option>
        <option>Use the arrows to order.</option>
      </ListBox>
      <Actions>
        <button aria-label="Configure media"><Gear /></button>
        <button aria-label="Remove media"><Cross /></button>
        <button aria-label="Move media up"><UpArrow /></button>
        <button aria-label="Move media down"><UpArrow down /></button>
      </Actions>
    </ListRow>
    <SideButtons><Ok $dim>OK</Ok><Cancel $dim>CANCEL</Cancel></SideButtons>
    <FootLinks>
      <FootRow><span>.</span><a href="#trust">Trust Center</a><span>.</span><a href="#legal">Legal</a><span>.</span><a href="#contact">Contact Esri</a><span>.</span></FootRow>
      <FootRow $inset><a href="#abuse">Report Abuse</a><span>.</span></FootRow>
    </FootLinks>
  </Side>
);

export default function App() {
  return (
    <Desktop>
      <Global />
      <BrowserWindow>
        <TabStrip>
          <Lights><Light /><Light /><Light /></Lights>
          <Tab>
            <Globe />
            <TabTitle>ArcGIS - Spring2021 test Demo</TabTitle>
            <button aria-label="Close tab"><Line s={20} w={4} d="M3 3l22 22M25 3L3 25" /></button>
          </Tab>
          <NewTab aria-label="New tab"><Line s={26} w={4} d="M14 1v26M1 14h26" /></NewTab>
          <TabMenu aria-label="Tab search">
            <svg width="28" height="28" viewBox="0 0 28 28"><circle cx="14" cy="14" r="14" fill="#9fa3a6" /><path d="M8 10h12l-6 9z" fill="#303436" /></svg>
          </TabMenu>
        </TabStrip>
        <NavBar>
          <NavButtons>
            <button aria-label="Back"><Line s={32} d="M26 14H3M14 3L3 14l11 11" w={2} /></button>
            <button aria-label="Forward"><Line s={32} d="M2 14h23M14 3l11 11-11 11" w={2} /></button>
            <button aria-label="Reload">
              <svg width="32" height="32" viewBox="0 0 32 32"><path d="M26 22a12 12 0 1 1 0-12" fill="none" stroke="#85868a" strokeWidth="3" /><path d="M29 3v12H17z" fill="#85868a" /></svg>
            </button>
          </NavButtons>
          <Address>
            <svg width="18" height="22" viewBox="0 0 18 22"><path d="M4 9V6a5 5 0 0 1 10 0v3" fill="none" stroke="#e4e4e4" strokeWidth="2" /><rect x="1" y="8" width="16" height="14" rx="2" fill="#e4e4e4" /></svg>
            <Url><b>arcgis.com</b>/home/webmap/viewer.html?webmap=578055e86487461bbc583bcfda06766a</Url>
            <button aria-label="Bookmark this page">
              <svg width="30" height="30" viewBox="0 0 30 30"><path d="M15 3l3.5 8.500 9 .8-6.800 6 2 9-7.700-4.700-7.700 4.700 2-9-6.800-6 9-.8z" fill="none" stroke="#cfcfcf" strokeWidth="2.5" /></svg>
            </button>
          </Address>
          <Incognito><SpyIcon />Incognito</Incognito>
          <button aria-label="Browser menu">
            <svg width="34" height="28" viewBox="0 0 34 28" fill="#85868a"><circle cx="20" cy="4" r="3" /><circle cx="20" cy="14" r="3" /><circle cx="20" cy="24" r="3" /></svg>
          </button>
        </NavBar>
        <Page>
          <Header>
            <Brand><span>Arc<b>GIS</b></span><OpenCaret /></Brand>
            <MapTitle>Spring2021 test Demo</MapTitle>
            <button aria-label="Edit title">
              <svg width="30" height="30" viewBox="0 0 30 30"><path d="M3 27l2-8L22 2q4 0 5 5L10 24z" fill="none" stroke="#0d3a5c" strokeWidth="2.5" /></svg>
            </button>
            <HeaderNav>
              <a href="#new">New Map</a>
              <a href="#present">Create Presentation</a>
              <User>
                <svg width="32" height="32" viewBox="0 0 32 32"><rect width="32" height="32" fill="#505050" /><circle cx="16" cy="11" r="7" fill="#5a5a5a" /><path d="M4 31q1-13 12-13t12 13z" fill="#5a5a5a" /></svg>
                Olivia <OpenCaret />
              </User>
            </HeaderNav>
          </Header>
          <Toolbar>
            <ToolGroup>
              <Tool $after={36}><DetailsIcon />Details</Tool>
              <Tool $after={26}><AddIcon />Add<Caret /></Tool>
              <Divider />
              <Tool $gap={10}><PencilIcon />Edit</Tool>
              <Tool $after={26}><BasemapIcon />Basemap</Tool>
              <Divider />
            </ToolGroup>
            <ToolGroup $end>
              <Tool $after={36} aria-label="Save"><SaveIcon /><Caret /></Tool>
              <Tool $gap={12} $after={32}><LinkIcon />Share</Tool>
              <Tool $gap={14} $after={26} aria-label="Print"><PrintIcon /><Caret /></Tool>
              <Divider />
              <Tool $after={50} aria-label="Measure"><MeasureIcon /></Tool>
              <Tool $gap={12} $after={32}><BookmarkIcon />Bookmarks</Tool>
              <Search>
                <input aria-label="Search" placeholder="Find address or place" />
                <button type="button" aria-label="Find">
                  <svg width="34" height="34" viewBox="0 0 34 34" fill="none" stroke="#161616" strokeWidth="2"><circle cx="13" cy="13" r="10" /><path d="M20 20l12 12" /></svg>
                </button>
              </Search>
            </ToolGroup>
          </Toolbar>
          <Workspace>
            <SidePanel />
            <Splitter><i /><i /><i /><i /></Splitter>
            <MapPane>
              <MapDrawing />
              <MapControls>
                <ControlStack>
                  <button aria-label="Zoom in"><Line s={32} w={4} d="M14 0v28M0 14h28" /></button>
                  <button aria-label="Default extent"><HouseIcon /></button>
                  <button aria-label="Zoom out"><Line s={32} w={4} d="M0 14h28" /></button>
                </ControlStack>
                <ControlStack><button aria-label="Find my location"><LocateIcon /></button></ControlStack>
              </MapControls>
              <Expand aria-label="Show overview map">
                <svg width="28" height="28" viewBox="0 0 28 28"><path d="M24 2l3 4-11 12 5 5H4V7l5 5L20 2z" fill="#4f5456" stroke="#26292a" strokeWidth="2.5" /></svg>
              </Expand>
              <ScaleBar>
                <svg width="214" height="16" viewBox="0 0 214 16"><path d="M0 0h214v16H0z" fill="#151515" /><path d="M2 8h53v6H2zM55 2h53v6H55zM108 8h53v6h-53zM161 2h51v6h-51z" fill="#595959" /></svg>
                <ScaleLabels><span>0</span><span>3</span><span>6km</span></ScaleLabels>
              </ScaleBar>
              <Credits>Esri, NASA, NGA, USGS | NYC OpenData, Esri, HERE, Garmin, SafeGraph, ...</Credits>
              <Powered><small>POWERED BY</small><strong>esri</strong></Powered>
            </MapPane>
          </Workspace>
          <Overlay><ConfigureImage /></Overlay>
        </Page>
      </BrowserWindow>
    </Desktop>
  );
}
